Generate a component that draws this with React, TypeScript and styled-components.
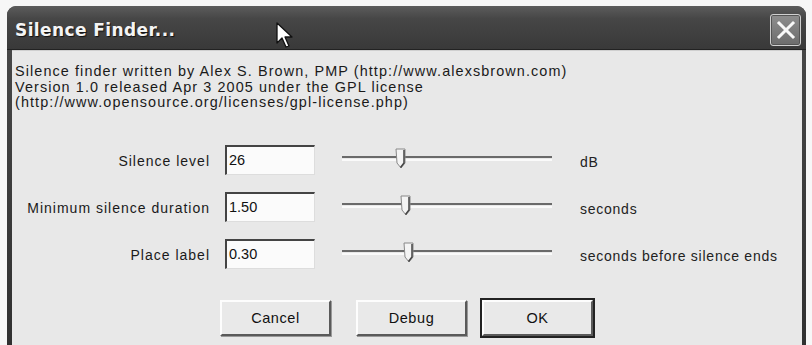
import React from "react";
import styled, { createGlobalStyle } from "styled-components";

const Global = createGlobalStyle`
  html, body { margin: 0; padding: 0; background: #f7f7f7; }
  body { width: 812px; height: 345px; overflow: hidden; font-family: "Liberation Sans", Arial, sans-serif; }
`;

const Page = styled.div`
  padding: 6px 6px 0 7px;
  position: relative;
`;

const Window = styled.div`
  width: 799px;
  height: 360px;
  border-radius: 9px 9px 0 0;
  background: linear-gradient(#4a4a4a, #2f2f2f);
  padding: 0 4px 0 5px;
  box-sizing: border-box;
  display: flex;
  flex-direction: column;
`;

const TitleBar = styled.div`
  height: 43px;
  display: flex;
  align-items: center;
  justify-content: space-between;
  background: linear-gradient(#5c5c5c 0%, #464646 30%, #393939 100%);
  margin: 0 -4px 0 -5px;
  padding-left: 8px;
  padding-right: 5px;
  border-radius: 9px 9px 0 0;
  border-bottom: 1px solid #222;
`;

const Title = styled.div`
  font-family: "DejaVu Sans", Verdana, sans-serif;
  font-weight: bold;
  font-size: 17px;
  color: #f4f4f4;
  text-shadow: 1px 1px 1px #111;
  letter-spacing: 0.4px;
  margin-top: 5px;
`;

const CloseBtn = styled.div`
  width: 31px;
  height: 32px;
  box-sizing: border-box;
  border: 1px solid #d0d0d0;
  border-radius: 3px;
  background: linear-gradient(#8e8e8e, #6c6c6c);
  display: flex;
  align-items: center;
  justify-content: center;
  margin-top: 5px;
  box-shadow: inset 0 0 0 1px #555;
`;

const Body = styled.div`
  flex: 1;
  background: #e8e8e8;
  padding: 13px 0 0 3px;
  border-top: 1px solid #cfcfcf;
`;

const Info = styled.div`
  font-size: 14.4px;
  line-height: 15.5px;
  letter-spacing: 1.1px;
  color: #1a1a1a;
`;

const Grid = styled.div`
  display: grid;
  grid-template-columns: 210px 90px 237px auto;
  row-gap: 17px;
  margin-top: 34px;
  align-items: center;
`;

const Label = styled.div`
  text-align: right;
  font-size: 14px;
  letter-spacing: 1px;
  color: #1a1a1a;
  padding-right: 15px;
  padding-top: 3px;
`;

const Input = styled.div`
  width: 90px;
  height: 30px;
  box-sizing: border-box;
  background: #fbfbfb;
  border-top: 2px solid #444;
  border-left: 2px solid #444;
  border-right: 1px solid #ddd;
  border-bottom: 1px solid #ddd;
  font-size: 14.5px;
  padding: 5px 0 0 2px;
  color: #111;
`;

const SliderWrap = styled.div`
  position: relative;
  margin-left: 27px;
  width: 210px;
  height: 30px;
`;

const Track = styled.div`
  position: absolute;
  left: 0;
  right: 0;
  top: 11px;
  height: 1px;
  border-top: 2px solid #6a6a6a;
  border-bottom: 2px solid #fafafa;
`;

const Thumb = styled.svg`
  position: absolute;
  top: 3px;
`;

const Unit = styled.div`
  font-size: 14px;
  letter-spacing: 0.75px;
  color: #222;
  margin-left: 28px;
  padding-top: 5px;
  white-space: nowrap;
`;

const Buttons = styled.div`
  display: flex;
  margin-top: 31px;
  padding-left: 205px;
`;

const Button = styled.div<{ $default?: boolean; $gap: number }>`
  width: 111px;
  height: 36px;
  margin-left: ${(p) => p.$gap}px;
  box-sizing: border-box;
  background: #e9e9e9;
  font-size: 14.5px;
  letter-spacing: 0.6px;
  color: #111;
  display: flex;
  align-items: center;
  justify-content: center;
  border: 2px solid;
  border-color: #fdfdfd #5a5a5a #5a5a5a #fdfdfd;
  box-shadow: ${(p) => (p.$default ? "0 0 0 2px #222" : "1px 1px 0 #999")};
`;

const Cursor = styled.svg`
  position: absolute;
  left: 276px;
  top: 22px;
`;

type RowProps = { label: string; value: string; pos: number; unit: string };

const Row = ({ label, value, pos, unit }: RowProps) => (
  <>
    <Label>{label}</Label>
    <Input>{value}</Input>
    <SliderWrap>
      <Track />
      <Thumb width="12" height="22" style={{ left: pos }} viewBox="0 0 12 22">
        <path d="M1 1 H10 V15 L6 20 L2 15 Z" fill="#f4f4f4" stroke="#888" strokeWidth="1" />
        <path d="M9 2 V15 L5.5 19.5" fill="none" stroke="#444" strokeWidth="1.5" />
      </Thumb>
    </SliderWrap>
    <Unit>{unit}</Unit>
  </>
);

export default function App() {
  return (
    <>
      <Global />
      <Page>
        <Window>
          <TitleBar>
            <Title>Silence Finder...</Title>
            <CloseBtn>
              <svg width="20" height="20" viewBox="0 0 20 20">
                <path d="M3 3 L17 17 M17 3 L3 17" stroke="#f8f8f8" strokeWidth="3" strokeLinecap="square" />
              </svg>
            </CloseBtn>
          </TitleBar>
          <Body>
            <Info>
              Silence finder written by Alex S. Brown, PMP (http://www.alexsbrown.com)
              <br />
              Version 1.0 released Apr 3 2005 under the GPL license
              <br />
              (http://www.opensource.org/licenses/gpl-license.php)
            </Info>
            <Grid>
              <Row label="Silence level" value="26" pos={53} unit="dB" />
              <Row label="Minimum silence duration" value="1.50" pos={58} unit="seconds" />
              <Row label="Place label" value="0.30" pos={61} unit="seconds before silence ends" />
            </Grid>
            <Buttons>
              <Button $gap={0}>Cancel</Button>
              <Button $gap={25}>Debug</Button>
              <Button $gap={15} $default>OK</Button>
            </Buttons>
          </Body>
        </Window>
        <Cursor width="18" height="28" viewBox="0 0 18 28">
          <path d="M1 1 L1 21 L6 16 L10 25 L13 24 L9 15 L16 15 Z" fill="#fff" stroke="#111" strokeWidth="1.3" strokeLinejoin="round" />
        </Cursor>
      </Page>
    </>
  );
}
